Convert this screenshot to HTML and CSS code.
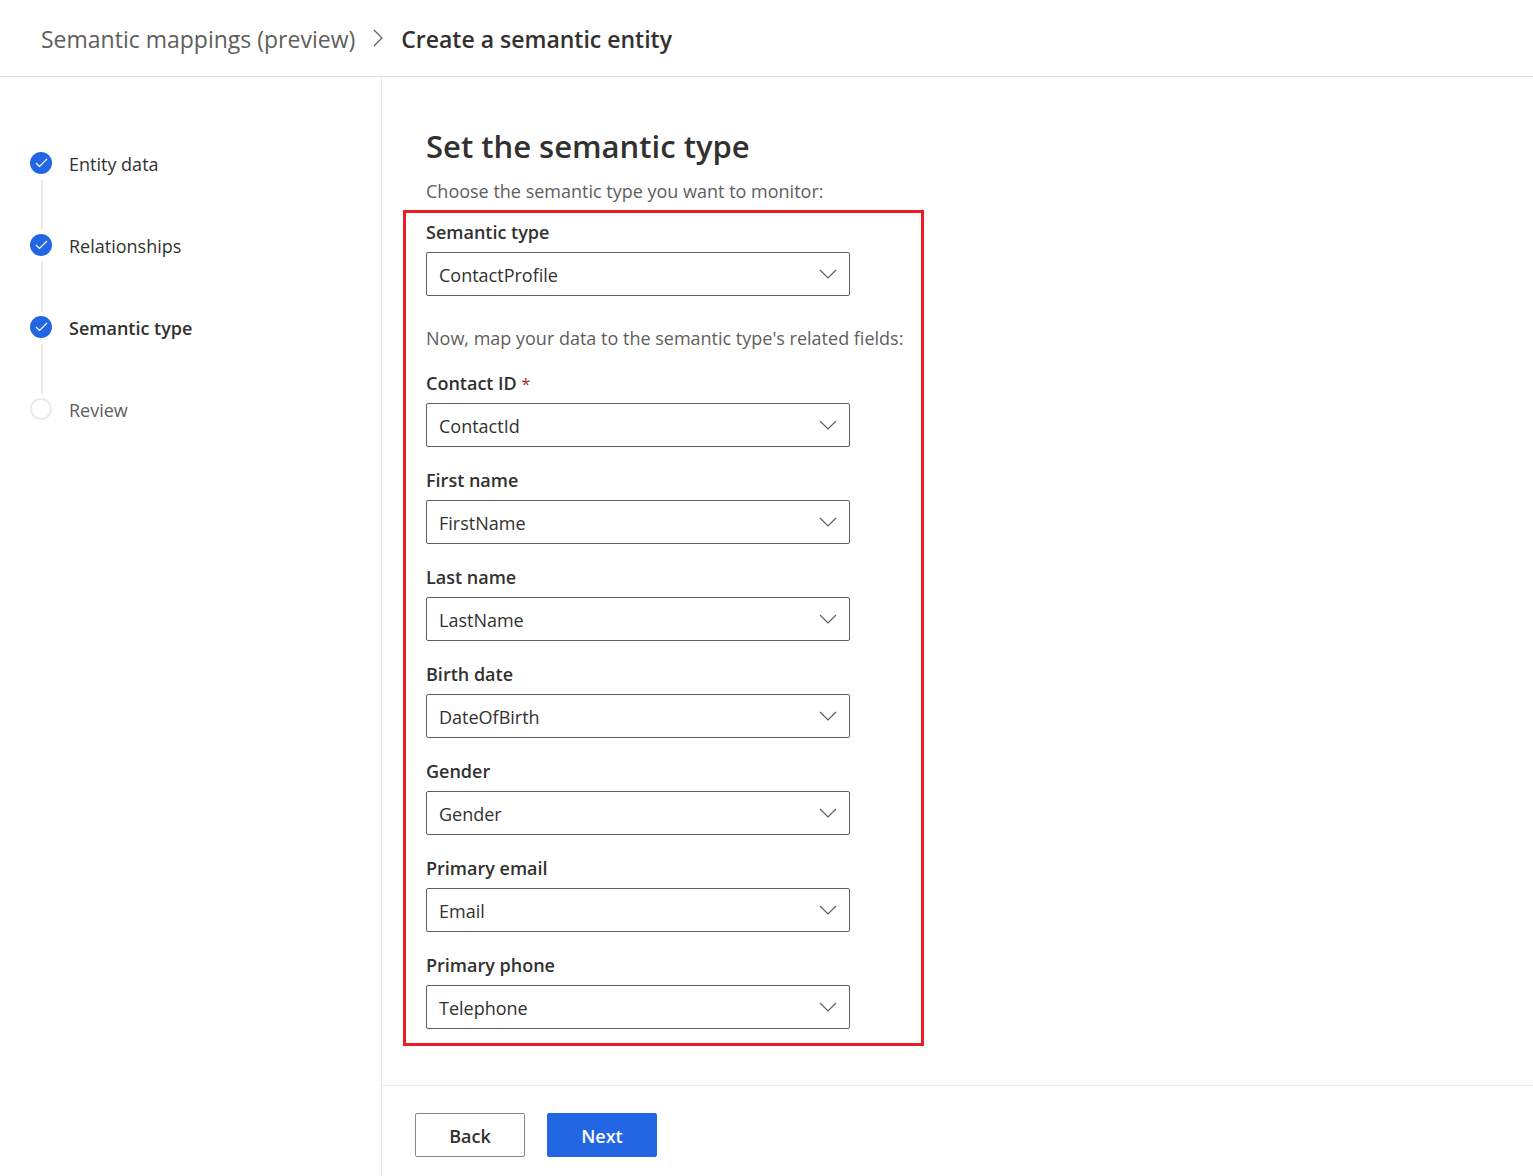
FILE: index.html
```html
<!DOCTYPE html>
<html lang="en">
<head>
<meta charset="utf-8">
<meta name="viewport" content="width=device-width, initial-scale=1">
<title>Create a semantic entity</title>
<link rel="stylesheet" href="styles.css">
</head>
<body>
<svg class="sprite" aria-hidden="true">
  <symbol id="check" viewBox="0 0 22 22"><path d="M6 11l3.5 3.5L17 7" fill="none" stroke="#fff" stroke-width="1.2"/></symbol>
  <symbol id="chevron" viewBox="0 0 18 10"><path d="M1 1l8 8 8-8" fill="none" stroke="#605e5c" stroke-width="1.2"/></symbol>
</svg>
<header class="header">
  <nav class="breadcrumb" aria-label="Breadcrumb">
    <a class="crumb" href="#">Semantic mappings (preview)</a>
    <svg class="crumb-sep" viewBox="0 0 10 18" aria-hidden="true"><path d="M1 1l8 8-8 8" fill="none" stroke="#605e5c" stroke-width="1.2"/></svg>
    <span class="crumb crumb-current" aria-current="page">Create a semantic entity</span>
  </nav>
</header>
<div class="layout">
  <aside class="sidebar">
    <ol class="steps">
      <li class="step"><svg class="marker" aria-hidden="true"><use href="#check"/></svg><span class="step-name">Entity data</span></li>
      <li class="step"><svg class="marker" aria-hidden="true"><use href="#check"/></svg><span class="step-name">Relationships</span></li>
      <li class="step step-current" aria-current="step"><svg class="marker" aria-hidden="true"><use href="#check"/></svg><span class="step-name">Semantic type</span></li>
      <li class="step step-pending"><span class="marker"></span><span class="step-name">Review</span></li>
    </ol>
  </aside>
  <form class="panel">
    <main class="content">
      <h1 class="title">Set the semantic type</h1>
      <p class="hint">Choose the semantic type you want to monitor:</p>
      <div class="mapping">
        <div class="field">
          <label class="label" for="type">Semantic type</label>
          <div class="dropdown"><select id="type"><option>ContactProfile</option></select><svg class="chevron" aria-hidden="true"><use href="#chevron"/></svg></div>
        </div>
        <p class="hint hint-map">Now, map your data to the semantic type's related fields:</p>
        <div class="field">
          <label class="label" for="contact">Contact ID <span class="required">*</span></label>
          <div class="dropdown"><select id="contact" required><option>ContactId</option></select><svg class="chevron" aria-hidden="true"><use href="#chevron"/></svg></div>
        </div>
        <div class="field">
          <label class="label" for="first">First name</label>
          <div class="dropdown"><select id="first"><option>FirstName</option></select><svg class="chevron" aria-hidden="true"><use href="#chevron"/></svg></div>
        </div>
        <div class="field">
          <label class="label" for="last">Last name</label>
          <div class="dropdown"><select id="last"><option>LastName</option></select><svg class="chevron" aria-hidden="true"><use href="#chevron"/></svg></div>
        </div>
        <div class="field">
          <label class="label" for="birth">Birth date</label>
          <div class="dropdown"><select id="birth"><option>DateOfBirth</option></select><svg class="chevron" aria-hidden="true"><use href="#chevron"/></svg></div>
        </div>
        <div class="field">
          <label class="label" for="gender">Gender</label>
          <div class="dropdown"><select id="gender"><option>Gender</option></select><svg class="chevron" aria-hidden="true"><use href="#chevron"/></svg></div>
        </div>
        <div class="field">
          <label class="label" for="email">Primary email</label>
          <div class="dropdown"><select id="email"><option>Email</option></select><svg class="chevron" aria-hidden="true"><use href="#chevron"/></svg></div>
        </div>
        <div class="field">
          <label class="label" for="phone">Primary phone</label>
          <div class="dropdown"><select id="phone"><option>Telephone</option></select><svg class="chevron" aria-hidden="true"><use href="#chevron"/></svg></div>
        </div>
      </div>
    </main>
    <footer class="footer">
      <button class="button" type="button">Back</button>
      <button class="button button-primary" type="button">Next</button>
    </footer>
  </form>
</div>
</body>
</html>
```
FILE: styles.css
```css
* {
  box-sizing: border-box;
}

body {
  display: flex;
  flex-direction: column;
  min-height: 100vh;
  margin: 0;
  background: #fff;
  color: #323130;
  font: 18px/24px "Segoe UI", "Open Sans", "Noto Sans", sans-serif;
}

.sprite {
  position: absolute;
  width: 0;
  height: 0;
}

.header {
  padding: 20px 41px;
  border-bottom: 1px solid #dfdfdf;
}

.breadcrumb {
  display: flex;
  align-items: center;
  gap: 18px;
}

.crumb {
  padding-top: 2px;
  color: #605e5c;
  font-size: 23px;
  line-height: 34px;
  text-decoration: none;
}

.crumb-current {
  color: #323130;
  font-weight: 600;
}

.crumb-sep {
  width: 10px;
  height: 18px;
}

.layout {
  display: flex;
  flex: 1;
}

.sidebar {
  flex: 0 0 382px;
  padding: 75px 30px;
  border-right: 1px solid #eaeaea;
}

.steps {
  display: grid;
  gap: 60px;
  margin: 0;
  padding: 0;
  list-style: none;
}

.step {
  position: relative;
  display: flex;
  align-items: center;
  gap: 17px;
  height: 22px;
}

.step:not(:last-child)::after {
  position: absolute;
  top: 28px;
  left: 11px;
  width: 2px;
  height: 50px;
  background: #eaeaea;
  content: "";
}

.step-name {
  padding-top: 2px;
}

.step-current {
  font-weight: 600;
}

.step-pending {
  color: #605e5c;
}

.marker {
  width: 22px;
  height: 22px;
  border-radius: 50%;
  background: #2266e3;
}

.step-pending .marker {
  border: 2px solid #eaeaea;
  background: #fff;
}

.panel {
  display: flex;
  flex: 1;
  flex-direction: column;
}

.content {
  flex: 1;
  padding: 46px 21px 39px;
}

.title {
  margin: 0 23px 10px;
  font-size: 31px;
  font-weight: 600;
  line-height: 46px;
}

.hint {
  margin: 0 23px;
  color: #605e5c;
}

.mapping {
  display: grid;
  gap: 21px;
  width: fit-content;
  min-width: 521px;
  margin-top: 7px;
  padding: 7px 10px 14px 20px;
  border: 3px solid #ed1c24;
}

.hint-map {
  margin: 9px 0 0;
}

.field {
  display: grid;
  gap: 8px;
  width: 424px;
}

.label {
  font-weight: 600;
}

.required {
  color: #a4262c;
  font-size: 16px;
  font-weight: 400;
  line-height: 1;
}

.dropdown {
  display: grid;
  align-items: center;
}

.dropdown > * {
  grid-area: 1 / 1;
}

.dropdown select {
  width: 100%;
  height: 44px;
  padding: 2px 40px 0 12px;
  border: 1px solid #605e5c;
  border-radius: 2px;
  background: #fff;
  color: #323130;
  font: inherit;
  appearance: none;
}

.chevron {
  justify-self: end;
  width: 18px;
  height: 10px;
  margin-right: 13px;
  pointer-events: none;
}

.footer {
  display: flex;
  gap: 22px;
  padding: 27px 33px 19px;
  border-top: 1px solid #eaeaea;
}

.button {
  width: 110px;
  height: 44px;
  padding: 2px 0 0;
  border: 1px solid #8a8886;
  border-radius: 2px;
  background: #fff;
  color: #323130;
  font: inherit;
  font-weight: 600;
}

.button-primary {
  border-color: #2266e3;
  background: #2266e3;
  color: #fff;
}
```
